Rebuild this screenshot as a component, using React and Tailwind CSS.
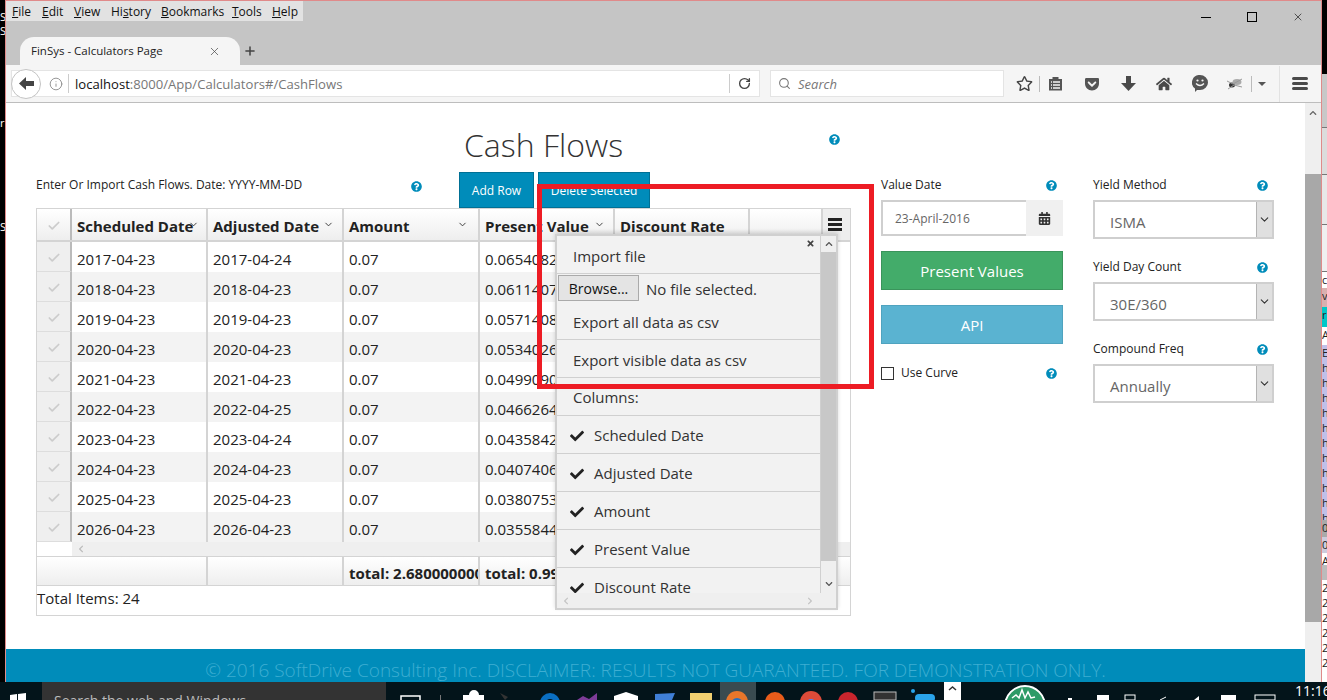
import { Check } from "lucide-react";
import {
  FaCheck,
  FaTimes,
  FaQuestionCircle,
  FaCalendarAlt,
  FaHome,
  FaRegStar,
  FaGetPocket,
  FaChevronUp,
  FaChevronDown,
  FaChevronLeft,
  FaChevronRight,
} from "react-icons/fa";
import { ChevronDown, X, Plus, Search, RotateCw, Info } from "lucide-react";

const rows = [
  ["2017-04-23", "2017-04-24", "0.0654082"],
  ["2018-04-23", "2018-04-23", "0.0611407"],
  ["2019-04-23", "2019-04-23", "0.0571408"],
  ["2020-04-23", "2020-04-23", "0.0534026"],
  ["2021-04-23", "2021-04-23", "0.0499090"],
  ["2022-04-23", "2022-04-25", "0.0466264"],
  ["2023-04-23", "2023-04-24", "0.0435842"],
  ["2024-04-23", "2024-04-23", "0.0407406"],
  ["2025-04-23", "2025-04-23", "0.0380753"],
  ["2026-04-23", "2026-04-23", "0.0355844"],
];

const columnsList = ["Scheduled Date", "Adjusted Date", "Amount", "Present Value", "Discount Rate"];

const Help = ({ className = "" }) => (
  <FaQuestionCircle className={`text-[11px] text-[#008cba] ${className}`} />
);

const HeaderCell = ({ label, width, chevron }) => (
  <div className={`${width} relative flex h-full items-center border-r-2 border-[#d4d4d4] pt-[3px] pl-[5px] text-[15px] font-bold whitespace-nowrap text-[#222]`}>
    {label}
    {chevron && <ChevronDown className={`absolute top-[10px] h-[11px] w-[11px] text-[#333] ${chevron}`} strokeWidth={2} />}
  </div>
);

const Select = ({ value }) => (
  <div className="flex h-[39px] w-[181px] border-2 border-[#cfcfcf] bg-white">
    <div className="flex-1 pt-[3px] pl-[15px] text-[15px] leading-[35px] text-[#666]">{value}</div>
    <div className="flex w-[16px] items-center justify-center border-l border-[#b4b4b4] bg-[#e0e0e0]">
      <ChevronDown className="h-[13px] w-[13px] text-[#333]" strokeWidth={2} />
    </div>
  </div>
);

const Taskbar = () => (
  <div className="flex h-[18px] bg-[#03141a]">
    <svg width="42" height="18" viewBox="0 682 42 18" className="shrink-0">
      <path d="M10 695l7-1v6h-7zM18 694l8-1v7h-8z" fill="#fff" />
    </svg>
    <div className="h-full w-[344px] shrink-0 overflow-hidden bg-[#333] pt-[9px] pl-[12px] text-[14px] leading-[20px] whitespace-nowrap text-[#bbb]">
      Search the web and Windows
    </div>
    <svg width="900" height="18" viewBox="386 682 900 18" className="shrink-0">
      <rect x="720" y="682" width="36" height="18" fill="#3a4b50" />
      <rect x="401" y="696" width="19" height="6" fill="none" stroke="#fff" strokeWidth="1.5" />
      <rect x="440" y="695" width="1" height="5" fill="#777" />
      <path d="M463 700v-5h6a5 5 0 0 1 10 0h5v5z" fill="#fff" />
      <path d="M500 693l8 4-3 3z" fill="#333" />
      <circle cx="550" cy="703" r="10" fill="#0a6fc2" />
      <circle cx="550" cy="704" r="5" fill="#03141a" />
      <path d="M577 700l6-4 6 3 8-6v7z" fill="#7d3c98" />
      <path d="M614 696l12-4 12 4v4h-24z" fill="#fff" />
      <path d="M655 694l20-1-3 7h-17z" fill="#3f7fd6" />
      <rect x="690" y="693" width="22" height="7" fill="#f0d070" />
      <circle cx="737" cy="702" r="11" fill="#e8762b" />
      <circle cx="737" cy="704" r="6" fill="#2a6fbb" />
      <circle cx="775" cy="702" r="10" fill="#e85c1a" />
      <circle cx="811" cy="702" r="11" fill="#dd4b39" />
      <circle cx="811" cy="704" r="5" fill="#4c8bf5" />
      <circle cx="848" cy="702" r="10" fill="#c9252d" />
      <rect x="874" y="692" width="22" height="8" fill="#333" stroke="#bbb" />
      <circle cx="913" cy="691" r="2" fill="#2aa4ea" />
      <rect x="915" y="694" width="20" height="8" rx="4" fill="#2aa4ea" />
      <rect x="944" y="682" width="17" height="18" fill="#fff" />
      <path d="M949 690l3.500-3 3.500 3" fill="none" stroke="#333" strokeWidth="1.500" />
      <circle cx="1025" cy="706" r="20" fill="#2e9b67" stroke="#fff" strokeWidth="2" />
      <path d="M1012 698l4-3 3 3 3-8 3 8 3-6 3 6 4-1" fill="none" stroke="#fff" strokeWidth="1.500" />
      <rect x="1068" y="698" width="4" height="2" fill="#fff" />
      <rect x="1097" y="695" width="12" height="5" fill="#fff" />
      <rect x="1125" y="695" width="10" height="5" fill="none" stroke="#fff" />
      <path d="M1160 700l6-3" stroke="#fff" />
      <path d="M1194 700l5-4v4z" fill="#fff" />
      <rect x="1221" y="695" width="15" height="5" fill="#fff" />
      <rect x="1255" y="695" width="20" height="5" fill="none" stroke="#fff" />
    </svg>
    <div className="shrink-0 pt-[1px] pl-[9px] text-[14px] leading-[16px] whitespace-nowrap text-white">11:16 A</div>
  </div>
);

export default function App() {
  return (
    <div className="relative flex h-[700px] w-[1327px] flex-col overflow-hidden bg-black font-['Open_Sans',sans-serif] text-[#222]">
      <div className="flex h-[682px]">
        {/* desktop behind the window, left side */}
        <div className="flex w-[5px] shrink-0 flex-col overflow-hidden pt-[10px] text-[11px] leading-[14px] text-white">
          <span>S</span>
          <span>S</span>
          <span className="mt-[78px]">r</span>
          <span className="mt-[90px]">S</span>
        </div>

        <div className="flex w-[1317px] shrink-0 flex-col border-x border-t border-[#e08a8a]">
          {/* tab strip */}
          <div className="flex h-[64px] flex-col bg-[#c5c5c5]">
            <div className="flex h-[20px] justify-between">
              <div className="flex w-[297px] bg-[#e2e2e2] pt-[2px] pl-[6px] text-[12px] leading-[18px] text-[#111]">
                <span className="w-[30px]"><u>F</u>ile</span>
                <span className="w-[32px]"><u>E</u>dit</span>
                <span className="w-[37px]"><u>V</u>iew</span>
                <span className="w-[50px]">Hi<u>s</u>tory</span>
                <span className="w-[71px]"><u>B</u>ookmarks</span>
                <span className="w-[40px]"><u>T</u>ools</span>
                <span><u>H</u>elp</span>
              </div>
              <div className="flex items-center gap-[34px] pt-[12px] pr-[17px]">
                <div className="flex w-[12px] justify-center">
                  <div className="h-[1px] w-[10px] bg-black" />
                </div>
                <div className="flex w-[12px] justify-center">
                  <div className="h-[10px] w-[10px] border border-black" />
                </div>
                <X className="h-[12px] w-[12px] text-black" strokeWidth={1.2} />
              </div>
            </div>
            <div className="mt-auto flex h-[28px] items-center pl-[14px]">
              <div className="flex h-full w-[220px] items-center justify-between rounded-t-[14px] bg-[#f5f5f5] pr-[19px] pl-[11px] text-[11.500px] text-[#222]">
                <span>FinSys - Calculators Page</span>
                <X className="h-[13px] w-[13px] text-[#444]" strokeWidth={1.3} />
              </div>
              <Plus className="ml-[3px] h-[14px] w-[14px] text-[#444]" strokeWidth={2.6} />
            </div>
          </div>

          {/* nav bar */}
          <div className="flex h-[38px] items-center border-b border-[#bdbdbd] bg-[#f5f5f5] pl-[5px]">
            <div className="flex h-[27px] w-[749px] items-center border border-[#e4e4e4] bg-white">
              <div className="-ml-[1px] flex h-[30px] w-[30px] items-center justify-center rounded-full border border-[#c4c4c4] bg-white">
                <svg width="15" height="13" viewBox="0 0 15 13">
                  <path d="M7 0L0 6.500 7 13V9h8V4H7z" fill="#444" />
                </svg>
              </div>
              <Info className="ml-[8px] h-[14px] w-[14px] text-[#888]" strokeWidth={1.5} />
              <div className="ml-[5px] h-[19px] w-[1px] bg-[#ccc]" />
              <span className="ml-[6px] pt-[2px] text-[13.100px] text-[#777]"><span className="text-[#111]">localhost</span>:8000/App/Calculators#/CashFlows</span>
              <div className="ml-auto h-[19px] w-[1px] bg-[#ccc]" />
              <RotateCw className="mx-[8px] h-[13px] w-[13px] text-[#444]" strokeWidth={2.5} />
            </div>
            <div className="ml-[10px] flex h-[27px] w-[234px] items-center border border-[#e4e4e4] bg-white pl-[7px]">
              <Search className="h-[13px] w-[13px] text-[#777]" strokeWidth={2} />
              <span className="ml-[7px] pt-[2px] text-[13px] text-[#777] italic">Search</span>
            </div>
            <FaRegStar className="ml-[12px] text-[17px] text-[#444]" />
            <div className="ml-[6px] h-[16px] w-[1px] bg-[#bbb]" />
            <svg width="15" height="15" viewBox="0 0 15 15" className="ml-[8px] text-[#555]">
              <path d="M1 3h3.500V1h6v2H14v11.500H1z" fill="currentColor" />
              <path d="M5 6h7M5 9h7M5 12h7" stroke="#f5f5f5" strokeWidth="1.300" />
              <path d="M3 6h1M3 9h1M3 12h1" stroke="#f5f5f5" strokeWidth="1.300" />
            </svg>
            <FaGetPocket className="ml-[21px] text-[16px] text-[#555]" />
            <svg width="15" height="15" viewBox="0 0 15 15" className="ml-[21px]">
              <path d="M5 0h5v7h5l-7.500 8L0 7h5z" fill="#4a4a4a" />
            </svg>
            <FaHome className="ml-[20px] text-[16px] text-[#4a4a4a]" />
            <svg width="16" height="17" viewBox="0 0 16 17" className="ml-[20px]">
              <path d="M8 0a8 7.500 0 0 1 0 15H5l-2 2v-3.500A7.500 7.500 0 0 1 8 0z" fill="#555" />
              <circle cx="5.500" cy="5.500" r="1.100" fill="#f5f5f5" />
              <circle cx="10.500" cy="5.500" r="1.100" fill="#f5f5f5" />
              <path d="M4 8.500q4 4 8 0" fill="none" stroke="#f5f5f5" strokeWidth="1.300" />
            </svg>
            <svg width="16" height="13" viewBox="0 0 16 13" className="ml-[19px]">
              <ellipse cx="5" cy="8" rx="3" ry="2.500" fill="#333" />
              <ellipse cx="10" cy="5" rx="4.500" ry="3" fill="#aaa" />
              <path d="M0 4l6 3 9-5M1 12l6-4 8 2" stroke="#999" strokeWidth="1" fill="none" />
            </svg>
            <div className="ml-[8px] h-[16px] w-[1px] bg-[#bbb]" />
            <div className="ml-[6px] h-0 w-0 border-x-[4px] border-t-[4px] border-x-transparent border-t-[#555]" />
            <div className="ml-[13px] h-[36px] w-[1px] bg-[#e2e2e2]" />
            <div className="ml-[12px] flex w-[16px] flex-col gap-[2px]">
              <div className="h-[3px] rounded-sm bg-[#4a4a4a]" />
              <div className="h-[3px] rounded-sm bg-[#4a4a4a]" />
              <div className="h-[3px] rounded-sm bg-[#4a4a4a]" />
            </div>
          </div>

          {/* page + page scrollbar */}
          <div className="flex flex-1">
            <div className="flex w-[1299px] flex-col bg-white">
              <div className="flex flex-1 pl-[30px]">
                {/* left column */}
                <div className="w-[815px]">
                  <div className="flex h-[69px] items-start pt-[22px]">
                    <h1 className="ml-[428px] text-[32px] leading-[40px] font-light text-[#333]">Cash Flows</h1>
                    <Help className="mt-[9px] ml-[206px]" />
                  </div>
                  <div className="flex h-[36px]">
                    <div className="w-[375px] pt-[5px] text-[12px] leading-[16px]">Enter Or Import Cash Flows. Date: YYYY-MM-DD</div>
                    <Help className="mt-[9px]" />
                    <button className="ml-[37px] h-[36px] w-[75px] border border-[#007095] bg-[#008cba] pt-[1px] text-[12px] text-white">Add Row</button>
                    <button className="ml-[4px] h-[36px] w-[112px] border border-[#007095] bg-[#008cba] pt-[1px] text-[12px] text-white">Delete Selected</button>
                  </div>

                  {/* grid */}
                  <div className="relative h-[408px] border border-[#d4d4d4]">
                    <div className="flex h-[33px] border-b-2 border-[#d4d4d4] bg-gradient-to-b from-white to-[#eeeeee]">
                      <div className="flex h-full w-[35px] items-center justify-center border-r-2 border-[#bbb] pt-[3px]">
                        <Check className="h-[14px] w-[14px] text-[#ccc]" strokeWidth={3} />
                      </div>
                      <HeaderCell label="Scheduled Date" width="w-[136px]" chevron="left-[116px]" />
                      <HeaderCell label="Adjusted Date" width="w-[136px]" chevron="left-[115px]" />
                      <HeaderCell label="Amount" width="w-[136px]" chevron="left-[113px]" />
                      <HeaderCell label="Present Value" width="w-[135px]" chevron="left-[114px]" />
                      <HeaderCell label="Discount Rate" width="w-[135px]" />
                      <div className="ml-auto flex h-[31px] w-[29px] items-center justify-center border-l-2 border-[#d4d4d4] bg-[#eeeeee] pr-[4px]">
                        <div className="flex w-[14px] flex-col gap-[2px]">
                          <div className="h-[3px] bg-[#222]" />
                          <div className="h-[3px] bg-[#222]" />
                          <div className="h-[3px] bg-[#222]" />
                        </div>
                      </div>
                    </div>

                    <div className="h-[300px] overflow-hidden">
                      {rows.map((row, i) => (
                        <div key={row[0]} className={`flex h-[30px] w-[713px] text-[15px] leading-[34px] ${i % 2 === 1 ? "bg-[#f3f3f3]" : "bg-white"}`}>
                          <div className="flex w-[35px] items-center justify-center border-r-2 border-b border-r-[#bbb] border-b-[#ddd] bg-[#efefef] pt-[3px]">
                            <Check className="h-[14px] w-[14px] text-[#ccc]" strokeWidth={3} />
                          </div>
                          <div className="w-[136px] border-r-2 border-[#d4d4d4] pl-[5px]">{row[0]}</div>
                          <div className="w-[136px] border-r-2 border-[#d4d4d4] pl-[5px]">{row[1]}</div>
                          <div className="w-[136px] border-r-2 border-[#d4d4d4] pl-[5px]">0.07</div>
                          <div className="w-[135px] border-r-2 border-[#d4d4d4] pl-[5px]">{row[2]}</div>
                        </div>
                      ))}
                    </div>

                    <div className="ml-[35px] flex h-[14px] items-center bg-[#efefef] pl-[5px]">
                      <FaChevronLeft className="text-[8px] text-[#bbb]" />
                    </div>

                    <div className="flex h-[30px] border-y border-[#d4d4d4] bg-gradient-to-b from-white to-[#eeeeee] text-[15px] leading-[32px] font-bold whitespace-nowrap">
                      <div className="w-[171px] border-r-2 border-[#d4d4d4]" />
                      <div className="w-[136px] border-r-2 border-[#d4d4d4]" />
                      <div className="w-[136px] overflow-hidden border-r-2 border-[#d4d4d4] pl-[5px]">total: 2.68000000000</div>
                      <div className="w-[135px] overflow-hidden border-r-2 border-[#d4d4d4] pl-[5px]">total: 0.99</div>
                    </div>

                    <div className="text-[15px] leading-[24px]">Total Items: 24</div>

                    {/* grid menu */}
                    <div className="absolute top-[25px] left-[518px] flex h-[376px] w-[283px] flex-col border-2 border-[#d0d0d0] bg-[#f2f2f2] shadow-[0_-2px_4px_rgba(0,0,0,0.15)]">
                      <div className="flex h-[357px]">
                        <div className="relative h-full w-[264px] overflow-hidden border-r border-[#d0d0d0] text-[15px] text-[#333]">
                          <FaTimes className="absolute top-[3px] right-[5px] text-[9px] text-[#444]" />
                          <div className="h-[38px] border-b border-[#d0d0d0] pl-[16px] leading-[41px]">Import file</div>
                          <div className="flex h-[37px] items-start pt-[1px] pl-[1px]">
                            <div className="flex h-[26px] w-[81px] items-center justify-center border border-[#aaa] bg-[#e4e4e4] pt-[1px] text-[14px] text-[#111]">Browse...</div>
                            <span className="ml-[7px] text-[15px] leading-[28px]">No file selected.</span>
                          </div>
                          <div className="h-[29px] border-b border-[#d0d0d0] pl-[16px] leading-[23px]">Export all data as csv</div>
                          <div className="h-[38px] border-b border-[#d0d0d0] pl-[16px] leading-[40px]">Export visible data as csv</div>
                          <div className="h-[38px] border-b border-[#d0d0d0] pl-[16px] leading-[39px]">Columns:</div>
                          {columnsList.map((c) => (
                            <div key={c} className="flex h-[38px] items-center border-b border-[#d0d0d0] pt-[2px] pl-[13px]">
                              <FaCheck className="text-[14px] text-[#222]" />
                              <span className="ml-[10px]">{c}</span>
                            </div>
                          ))}
                        </div>
                        <div className="flex w-[15px] flex-col items-center bg-[#efefef]">
                          <div className="flex h-[16px] items-center justify-center">
                            <FaChevronUp className="text-[8px] text-[#555]" />
                          </div>
                          <div className="h-[309px] w-full bg-[#c8c8c8]" />
                          <div className="flex-1 pt-[19px]">
                            <FaChevronDown className="text-[8px] text-[#555]" />
                          </div>
                        </div>
                      </div>
                      <div className="flex flex-1 items-center justify-between bg-[#efefef] pr-[22px] pl-[5px]">
                        <FaChevronLeft className="text-[8px] text-[#c4c4c4]" />
                        <FaChevronRight className="text-[8px] text-[#c4c4c4]" />
                      </div>
                    </div>
                  </div>
                </div>

                {/* value date column */}
                <div className="ml-[30px] w-[182px] pt-[73px]">
                  <div className="flex h-[24px] items-start justify-between pr-[6px] text-[12px] leading-[17px]">
                    Value Date
                    <Help className="mt-[4px]" />
                  </div>
                  <div className="flex h-[36px]">
                    <div className="w-[145px] border-2 border-r-0 border-[#cfcfcf] bg-white pl-[12px] text-[12px] leading-[34px] text-[#666]">23-April-2016</div>
                    <div className="flex flex-1 items-center justify-center bg-[#f0f0f0]">
                      <FaCalendarAlt className="text-[13px] text-[#333]" />
                    </div>
                  </div>
                  <button className="mt-[15px] h-[39px] w-full border border-[#3a945b] bg-[#43ac6a] pt-[1px] text-[15px] text-white">Present Values</button>
                  <button className="mt-[15px] h-[39px] w-full border border-[#4fa3bf] bg-[#5ab3d1] pt-[1px] text-[15px] text-white">API</button>
                  <div className="mt-[20px] flex items-center">
                    <div className="h-[13px] w-[13px] border border-[#333] bg-white" />
                    <span className="ml-[7px] text-[12px]">Use Curve</span>
                    <Help className="mr-[6px] ml-auto" />
                  </div>
                </div>

                {/* yield column */}
                <div className="ml-[30px] w-[181px] pt-[73px]">
                  {[
                    ["Yield Method", "ISMA"],
                    ["Yield Day Count", "30E/360"],
                    ["Compound Freq", "Annually"],
                  ].map(([label, value]) => (
                    <div key={label} className="h-[82px]">
                      <div className="flex h-[24px] items-start justify-between pr-[6px] text-[12px] leading-[17px]">
                        {label}
                        <Help className="mt-[4px]" />
                      </div>
                      <Select value={value} />
                    </div>
                  ))}
                </div>
              </div>

              <div className="h-[33px] bg-[#008cba] text-center text-[19px] leading-[43px] font-light whitespace-nowrap text-[#3eaed2]">
                © 2016 SoftDrive Consulting Inc. DISCLAIMER: RESULTS NOT GUARANTEED. FOR DEMONSTRATION ONLY.
              </div>
            </div>

            {/* page scrollbar */}
            <div className="flex w-[16px] flex-col bg-[#efefef]">
              <div className="flex h-[71px] justify-center pt-[6px]">
                <FaChevronUp className="text-[8px] text-[#666]" />
              </div>
              <div className="h-[448px] bg-[#a8a8a8]" />
            </div>
          </div>
        </div>

        {/* desktop behind the window, right side */}
        <div className="flex w-[5px] shrink-0 flex-col overflow-hidden text-[11px] leading-[16px] text-[#222]">
          <div className="h-[74px] bg-black" />
          <div className="h-[54px] border-b border-[#777] bg-[#c8c8c8]" />
          <div className="h-[47px] border-b border-[#777] bg-[#dcdcdc]" />
          <div className="h-[50px] border-b border-[#777] bg-[#e8e8e8]" />
          <div className="h-[47px] border-b border-[#777] bg-[#f0f0f0]" />
          <div className="h-[16px] bg-white">c</div>
          <div className="h-[19px] bg-[#d9b0b0]">v</div>
          <div className="h-[20px] bg-[#00c8c8]">r</div>
          <div className="h-[18px] bg-white">A</div>
          <div className="h-[175px] bg-[#c0c0e8] leading-[15px]">E h h h h h h h h h h h</div>
          <div className="h-[17px] bg-[#aaa]">0</div>
          <div className="h-[16px] bg-[#ccd]">0</div>
          <div className="h-[12px] bg-white">A</div>
          <div className="h-[15px] bg-[#bbb]" />
          <div className="flex-1 bg-white leading-[15px]">2 2 2 2 2 2</div>
        </div>
      </div>

      <Taskbar />

      {/* red annotation box */}
      <div className="pointer-events-none absolute top-[184px] left-[537px] h-[205px] w-[337px] border-[5px] border-[#ed1c24]" />
    </div>
  );
}
